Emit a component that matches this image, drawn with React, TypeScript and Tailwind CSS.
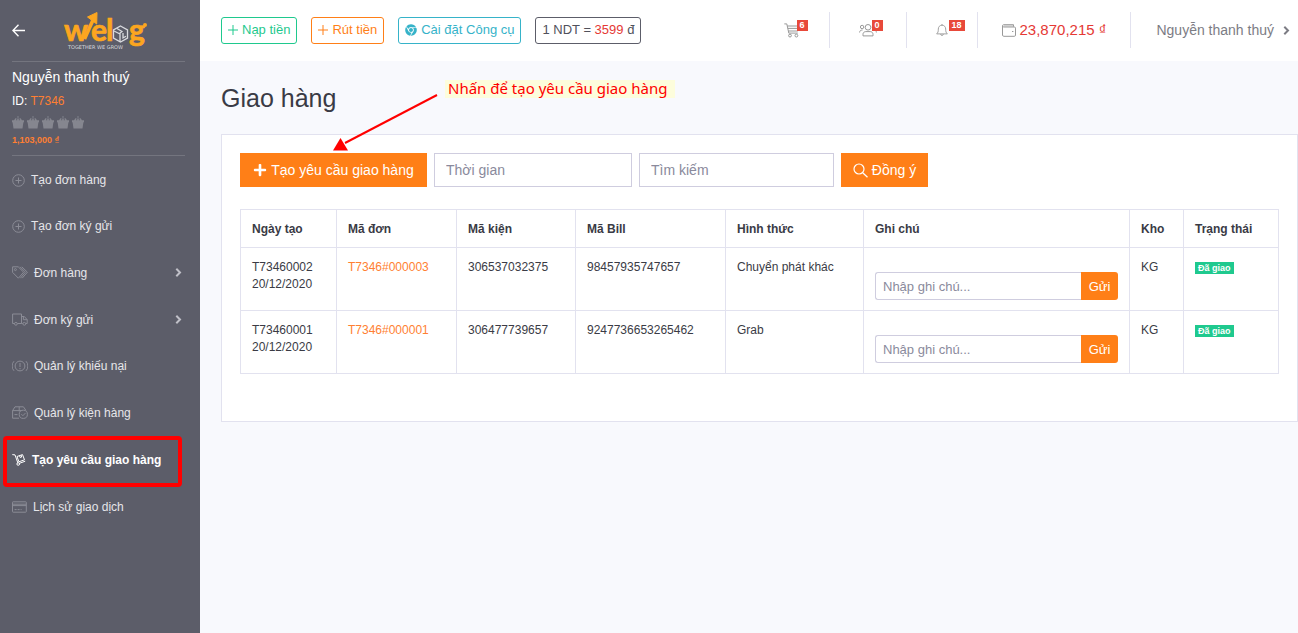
import type { ReactNode } from 'react';
import { FaChrome, FaPlus } from 'react-icons/fa';

interface NavItem {
  label: string;
  icon: ReactNode;
  compact?: boolean;
  hasChildren?: boolean;
  active?: boolean;
}

interface Delivery {
  code: string;
  date: string;
  order: string;
  parcel: string;
  bill: string;
  method: string;
  warehouse: string;
  status: string;
}

const stroke = { fill: 'none', stroke: 'currentColor', strokeWidth: 1 };

const PlusCircleIcon = () => (
  <svg width="13" height="13" viewBox="0 0 13 13" {...stroke}>
    <circle cx="6.5" cy="6.5" r="5.8" />
    <path d="M6.5 3.5v6M3.5 6.5h6" />
  </svg>
);

const TagsIcon = () => (
  <svg width="16" height="13" viewBox="0 0 16 13" {...stroke}>
    <path d="M.6.8h5.6l5.4 5.4-5.2 6L.6 6.4z" />
    <circle cx="3.4" cy="3.6" r="1" />
    <path d="M8 .8l5.4 5.4-5 6M9.8.8l5.6 5.4-5.2 6" />
  </svg>
);

const TruckIcon = () => (
  <svg width="16" height="13" viewBox="0 0 16 13" {...stroke}>
    <path d="M2.4 10.5H.6V1h8.9v9.5H5.4M9.5 3.5h2.8l2.9 3.2v3.8h-1.3M9.5 10.5h1.2M11.4 3.5v3.2h3.8" />
    <circle cx="3.9" cy="10.8" r="1.4" />
    <circle cx="12.3" cy="10.8" r="1.4" />
  </svg>
);

const AlertIcon = () => (
  <svg width="16" height="12" viewBox="0 0 16 12" {...stroke}>
    <circle cx="8" cy="6" r="4.9" />
    <path d="M8 3v4M8 8v1.2M2 1.2a7 7 0 0 0 0 9.6M14 1.2a7 7 0 0 1 0 9.6" />
  </svg>
);

const PackageIcon = () => (
  <svg width="16" height="13" viewBox="0 0 16 13" {...stroke}>
    <path d="M7 12.2H.6V4.600L3 .8h8.400l2.400 3.400M.6 4.600h9.200M7.200.8v4.600M2.500 8.600h3" />
    <circle cx="11.3" cy="8.3" r="4.1" />
    <path d="M9.4 8.2l1.5 1.5 2.5-2.6" />
  </svg>
);

const HandTruckIcon = () => (
  <svg width="14" height="13" viewBox="0 0 14 13" {...stroke}>
    <path d="M.3 1.6l2.700.3 2.900 8.100M7.200 10.400l6-2.200M5 3.500l5.500-1.900 2 5.200-5.600 2zM7.500 2.600l.7 1.900 1.500-.5-.6-1.900" />
    <circle cx="6.2" cy="11" r="1.3" />
  </svg>
);

const CardIcon = () => (
  <svg width="15" height="12" viewBox="0 0 15 12" {...stroke}>
    <rect x=".5" y=".8" width="13.8" height="10.4" rx=".6" />
    <path d="M.5 3.2h13.8M.5 4.6h13.8M2.6 8.6h2M5.6 8.6h2M8.6 8.6h1" />
  </svg>
);

const CartIcon = () => (
  <svg width="16" height="15" viewBox="0 0 16 15" {...stroke}>
    <path d="M.3.9h2.5l2 9.2h9M3.3 3h11.9l-1.4 5H4.4M3.8 5.4h10.6" />
    <circle cx="6" cy="12.6" r="1.4" />
    <circle cx="12.4" cy="12.6" r="1.4" />
  </svg>
);

const UsersIcon = () => (
  <svg width="18" height="14" viewBox="0 0 18 14" {...stroke}>
    <circle cx="9" cy="4.3" r="2.8" />
    <path d="M4 12.9v-1.6c0-1.6 1.2-2.7 2.8-2.7h4.4c1.6 0 2.8 1.1 2.8 2.7v1.6z" />
    <circle cx="3.1" cy="4" r="1.7" />
    <circle cx="14.9" cy="4" r="1.7" />
    <path d="M.6 9.5C.6 8 1.5 7 3.5 7M17.4 9.5c0-1.5-.9-2.5-2.9-2.5" />
  </svg>
);

const BellIcon = () => (
  <svg width="12" height="14" viewBox="0 0 13 14" {...stroke}>
    <path d="M.7 11.2c1.5-1.2 1.8-2.6 1.8-5.2 0-2.4 1.6-4.2 4-4.2s4 1.8 4 4.2c0 2.6.3 4 1.8 5.2zM5 11.4c0 2 3 2 3 0M6.5 1.8V.5" />
  </svg>
);

const WalletIcon = () => (
  <svg width="14" height="13" viewBox="0 0 14 13" {...stroke}>
    <path d="M2 1h9.6v1.8H2z" fill="#ddd" stroke="none" />
    <path d="M1.8.7h9.7v2M1.8.7C0 .7 0 3 1.8 3h10.6c.7 0 1.1.4 1.1 1.1v7c0 .8-.4 1.2-1.1 1.2H1.8c-.8 0-1.3-.5-1.3-1.3V2" />
    <path d="M10 7.5h1.4" />
  </svg>
);

const SearchIcon = () => (
  <svg width="15" height="15" viewBox="0 0 15 15" {...stroke} strokeWidth="1.2">
    <circle cx="6" cy="6" r="5" />
    <path d="M9.7 9.7l4.8 4.6" />
  </svg>
);

const BasketIcon = () => (
  <svg width="12" height="13" viewBox="0 0 12 13" fill="currentColor">
    <path d="M0 4.200h2L3.700 2l1 .7L3.900 4.200h1.300V2.500h1.600v1.700h1.300L7.300 2.700l1-.7L10 4.200h2v2h-.6l-.9 6.300h-9L.6 6.200H0z" />
    <circle cx="6" cy="1" r="0.8" />
  </svg>
);

const ChevronIcon = () => (
  <svg width="7" height="9" viewBox="0 0 7 9" fill="none" stroke="currentColor" strokeWidth="2">
    <path d="M1.300.8L5 4.500 1.300 8.200" />
  </svg>
);

const Logo = () => (
  <svg className="overflow-visible" width="86" height="40" viewBox="0 0 86 40" role="img" aria-label="Welog">
    <g fill="#fca61f" fontFamily="Lato, sans-serif" fontWeight="700" fontSize="30" stroke="#fca61f" strokeWidth="0.7">
      <text x="1" y="30">w</text>
      <text x="28" y="30">e</text>
      <text x="43" y="30">l</text>
      <text x="66" y="30">g</text>
    </g>
    <path d="M21.500 28L30 9" stroke="#fca61f" strokeWidth="3.600" />
    <path d="M24.500 6L34 1.500 33.700 13z" fill="#fca61f" stroke="#fca61f" strokeLinejoin="round" />
    <circle cx="82" cy="14" r="2" fill="#fca61f" />
    <g fill="none" stroke="#d9dade" strokeWidth="1.300">
      <path d="M57.500 15l7 4v8l-7 4-7-4v-8z" />
      <path d="M54 17.500l5 3-2 1.500v9M51 20l6 3M60 22v5l3-1.700" />
    </g>
    <text x="5" y="38" fill="#d9dade" fontFamily="DejaVu Sans, sans-serif" fontSize="5">
      TOGETHER WE GROW
    </text>
  </svg>
);

const navItems: NavItem[] = [
  { label: 'Tạo đơn hàng', icon: <PlusCircleIcon />, compact: true },
  { label: 'Tạo đơn ký gửi', icon: <PlusCircleIcon />, compact: true },
  { label: 'Đơn hàng', icon: <TagsIcon />, hasChildren: true },
  { label: 'Đơn ký gửi', icon: <TruckIcon />, hasChildren: true },
  { label: 'Quản lý khiếu nại', icon: <AlertIcon />, compact: true },
  { label: 'Quản lý kiện hàng', icon: <PackageIcon /> },
  { label: 'Tạo yêu cầu giao hàng', icon: <HandTruckIcon />, active: true },
  { label: 'Lịch sử giao dịch', icon: <CardIcon /> },
];

const deliveries: Delivery[] = [
  {
    code: 'T73460002',
    date: '20/12/2020',
    order: 'T7346#000003',
    parcel: '306537032375',
    bill: '98457935747657',
    method: 'Chuyển phát khác',
    warehouse: 'KG',
    status: 'Đã giao',
  },
  {
    code: 'T73460001',
    date: '20/12/2020',
    order: 'T7346#000001',
    parcel: '306477739657',
    bill: '9247736653265462',
    method: 'Grab',
    warehouse: 'KG',
    status: 'Đã giao',
  },
];

const columns = [
  { label: 'Ngày tạo', width: 'w-24' },
  { label: 'Mã đơn', width: 'w-[120px]' },
  { label: 'Mã kiện', width: 'w-[119px]' },
  { label: 'Mã Bill', width: 'w-[150px]' },
  { label: 'Hình thức', width: 'w-[138px]' },
  { label: 'Ghi chú', width: 'w-auto' },
  { label: 'Kho', width: 'w-[54px]' },
  { label: 'Trạng thái', width: 'w-[95px]' },
];

const cellClass = 'border border-[#e2e2ef] px-[11px] pt-[11px] pb-[9px]';

function Sidebar() {
  return (
    <aside className="w-[200px] shrink-0 bg-[#5c5d69] text-white">
      <div className="ml-3 mr-[15px] flex h-[62px] items-center border-b border-[#74757f]">
        <button type="button" aria-label="Thu gọn menu" className="w-[13px]">
          <svg width="13" height="13" viewBox="0 0 13 13" fill="none" stroke="currentColor" strokeWidth="1.4">
            <path d="M13 6.500H1M6.500.8L.9 6.500l5.600 5.700" />
          </svg>
        </button>
        <a href="#" className="ml-[38px]">
          <Logo />
        </a>
      </div>

      <div className="ml-3 mr-[15px] border-b border-[#74757f] pt-[5px] pb-2">
        <p className="text-sm leading-5">Nguyễn thanh thuý</p>
        <p className="mt-1 text-xs leading-5">
          ID: <span className="text-[#ff7f32]">T7346</span>
        </p>
        <div className="mt-[5px] flex gap-[3px] text-[#85868f]">
          {[1, 2, 3, 4, 5].map((level) => (
            <BasketIcon key={level} />
          ))}
        </div>
        <p className="mt-1 text-[9px] leading-[14px] font-bold text-[#ff7f32]">1,103,000 ₫</p>
      </div>

      <nav aria-label="Menu chính" className="pt-px">
        <ul>
          {navItems.map((item) => (
            <li key={item.label} className="relative">
              <a
                href="#"
                aria-current={item.active ? 'page' : undefined}
                className={`flex items-center pl-3 pr-[18px] text-xs ${item.compact ? 'h-[46px]' : 'h-[47px]'} ${
                  item.active ? 'font-bold text-white' : 'text-[#e6e6ea]'
                }`}
              >
                <span className={item.active ? 'text-white' : 'text-[#8b8c96]'}>{item.icon}</span>
                <span className="ml-[6px] flex-1 whitespace-nowrap">{item.label}</span>
                {item.hasChildren && (
                  <span className="text-[#c0c0c8]">
                    <ChevronIcon />
                  </span>
                )}
              </a>
              {item.active && (
                <span className="pointer-events-none absolute top-0 -bottom-1 left-[3px] right-[18px] rounded-sm border-4 border-[#ff0000]" />
              )}
            </li>
          ))}
        </ul>
      </nav>
    </aside>
  );
}

function Counter({ label, count, icon }: { label: string; count: number; icon: ReactNode }) {
  return (
    <a href="#" aria-label={label} className="flex h-9 items-center border-r border-[#e2e2ef] px-[29px] text-[#999]">
      <span className="relative block">
        {icon}
        <span className="absolute -top-[3px] left-[13px] bg-[#e8493a] px-[3px] text-[9px] leading-[11px] font-bold text-white">
          {count}
        </span>
      </span>
    </a>
  );
}

function TopBar() {
  const buttonClass = 'flex h-[27px] items-center gap-1 rounded-[3px] border px-[6px] text-[13px] whitespace-nowrap';

  return (
    <header className="flex items-center justify-between bg-white pt-3 pb-[13px] pl-[21px]">
      <div className="flex items-center gap-[14px]">
        <button type="button" className={`${buttonClass} border-[#1fc98e] text-[#1fc98e]`}>
          <svg width="10" height="10" viewBox="0 0 10 10" {...stroke}>
            <path d="M5 0v10M0 5h10" />
          </svg>
          Nạp tiền
        </button>
        <button type="button" className={`${buttonClass} border-[#ff7f17] text-[#ff7f17]`}>
          <svg width="10" height="10" viewBox="0 0 10 10" {...stroke}>
            <path d="M5 0v10M0 5h10" />
          </svg>
          Rút tiền
        </button>
        <a href="#" className={`${buttonClass} border-[#36b3c9] text-[#36b3c9]`}>
          <FaChrome size={12} />
          Cài đặt Công cụ
        </a>
        <div className={`${buttonClass} border-[#5c5d69] text-[#50515c]`}>
          <span>
            1 NDT = <span className="text-[#e53935]">3599</span> đ
          </span>
        </div>
      </div>

      <div className="flex items-center">
        <Counter label="Giỏ hàng" count={6} icon={<CartIcon />} />
        <Counter label="Khách hàng" count={0} icon={<UsersIcon />} />
        <Counter label="Thông báo" count={18} icon={<BellIcon />} />
        <a href="#" className="flex h-9 items-center gap-1 border-r border-[#e2e2ef] px-6 text-[15px] text-[#e53935]">
          <span className="text-[#999]">
            <WalletIcon />
          </span>
          23,870,215 ₫
        </a>
        <button type="button" className="flex items-center gap-[9px] pl-[25px] pr-2 text-sm text-[#7c7c84]">
          Nguyễn thanh thuý
          <ChevronIcon />
        </button>
      </div>
    </header>
  );
}

function Toolbar() {
  const inputClass =
    'h-[34px] border border-[#cfcddf] bg-white px-[11px] text-sm placeholder:text-[#8a8a9c] placeholder:opacity-100';
  const buttonClass = 'flex h-[34px] items-center justify-center gap-1 bg-[#ff7f17] text-sm whitespace-nowrap text-white';

  return (
    <div className="flex items-center gap-[7px]">
      <button type="button" className={`${buttonClass} min-w-[187px] px-3`}>
        <FaPlus size={14} />
        Tạo yêu cầu giao hàng
      </button>
      <input type="text" aria-label="Thời gian" placeholder="Thời gian" className={`${inputClass} w-[198px]`} />
      <input type="text" aria-label="Tìm kiếm" placeholder="Tìm kiếm" className={`${inputClass} w-[195px]`} />
      <button type="submit" className={`${buttonClass} min-w-[87px] px-[11px]`}>
        <SearchIcon />
        Đồng ý
      </button>
    </div>
  );
}

function DeliveryTable() {
  return (
    <table className="mt-[22px] w-full table-fixed border-collapse text-left text-xs leading-[17px]">
      <thead>
        <tr>
          {columns.map((column) => (
            <th key={column.label} className={`${cellClass} ${column.width} font-bold`}>
              {column.label}
            </th>
          ))}
        </tr>
      </thead>
      <tbody>
        {deliveries.map((row) => (
          <tr key={row.code} className="align-top">
            <td className={cellClass}>
              {row.code}
              <br />
              {row.date}
            </td>
            <td className={cellClass}>
              <a href="#" className="text-[#ff7f32]">
                {row.order}
              </a>
            </td>
            <td className={cellClass}>{row.parcel}</td>
            <td className={cellClass}>{row.bill}</td>
            <td className={cellClass}>{row.method}</td>
            <td className={cellClass}>
              <form className="mt-[13px] mb-px flex h-7">
                <input
                  type="text"
                  aria-label={`Ghi chú ${row.code}`}
                  placeholder="Nhập ghi chú..."
                  className="min-w-0 flex-1 rounded-l-[3px] border border-r-0 border-[#cfcddf] px-[7px] text-[13px] placeholder:text-[#8a8a9c] placeholder:opacity-100"
                />
                <button type="button" className="w-[37px] rounded-r-[3px] bg-[#ff7f17] text-[13px] text-white">
                  Gửi
                </button>
              </form>
            </td>
            <td className={cellClass}>{row.warehouse}</td>
            <td className={cellClass}>
              <span className="mt-[3px] block w-fit bg-[#1fc98e] px-[3px] text-[9px] leading-3 font-bold text-white">
                {row.status}
              </span>
            </td>
          </tr>
        ))}
      </tbody>
    </table>
  );
}

// Hint that points at the "create request" button
function Hint() {
  return (
    <div className="pointer-events-none absolute top-[19px] left-[132px] flex text-[#ff0000]">
      <svg width="106" height="74" viewBox="0 0 106 74">
        <path d="M105 15L13 63" stroke="currentColor" strokeWidth="2" />
        <path d="M1 70.500L8.500 58l7.500 12.500z" fill="currentColor" />
      </svg>
      <span className="ml-[7px] h-[18px] bg-[#fdfddc] pl-[3px] pr-2 font-['Noto_Sans',sans-serif] text-[15px] leading-4 whitespace-nowrap">
        Nhấn để tạo yêu cầu giao hàng
      </span>
    </div>
  );
}

export default function App() {
  return (
    <div className="flex min-h-screen bg-[#f8f9fd] font-['Liberation_Sans',Arial,sans-serif] text-[#3a3b45]">
      <Sidebar />
      <div className="min-w-0 flex-1">
        <TopBar />
        <main className="relative pt-[22px] pl-[21px]">
          <h1 className="mb-[21px] text-[25px] leading-[30px]">Giao hàng</h1>
          <section className="border border-[#e2e2ef] bg-white px-[18px] pt-[18px] pb-[47px]">
            <Toolbar />
            <DeliveryTable />
          </section>
          <Hint />
        </main>
      </div>
    </div>
  );
}
